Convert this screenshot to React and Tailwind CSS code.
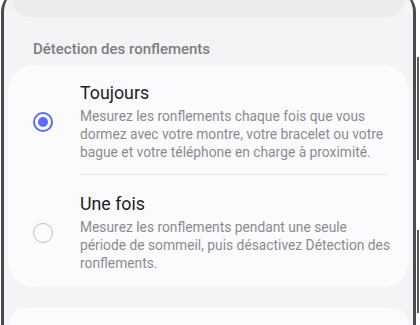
import React from "react";

function Radio({ checked }) {
  return checked ? (
    <div className="w-[20px] h-[20px] rounded-full border-[2px] border-[#5b6cf2] flex items-center justify-center shrink-0">
      <div className="w-[10px] h-[10px] rounded-full bg-[#5b6cf2]" />
    </div>
  ) : (
    <div className="w-[20px] h-[20px] rounded-full border-[1.5px] border-[#bcbcbe] shrink-0" />
  );
}

function Option({ checked, title, lines }) {
  return (
    <div className="flex items-center">
      <div className="w-[20px] ml-[25px] mr-[27px] flex justify-center">
        <Radio checked={checked} />
      </div>
      <div className="flex-1 pr-[8px]">
        <div className="text-[17.8px] leading-[22px] text-[#1e1e20]">{title}</div>
        <div className="mt-[3px] text-[13.8px] leading-[18px] text-[#8b8b8e] whitespace-nowrap">
          {lines.map((l, i) => (
            <div key={i}>{l}</div>
          ))}
        </div>
      </div>
    </div>
  );
}

export default function App() {
  return (
    <div
      className="w-[420px] h-[325px] overflow-hidden bg-white flex"
      style={{ fontFamily: "Roboto, 'Noto Sans', sans-serif" }}
    >
      <div className="w-[1px] shrink-0" />
      <div className="w-[415px] shrink-0 h-[345px] -mt-[10px] rounded-t-[22px] border-x-[3px] border-[#4a4a52] bg-[#f4f4f6] overflow-hidden">
        <div className="px-[4px] pt-[10px]">
          <div className="h-[17px] mx-[4px] rounded-b-[24px] bg-[#ececee]" />
          <div className="pl-[25px] pt-[23px] pb-[7px] text-[15px] leading-[18px] font-medium text-[#7d7d80]">
            Détection des ronflements
          </div>
          <div className="rounded-[26px] bg-[#fbfbfd] pt-[17px] pb-[15px]">
            <Option
              checked
              title="Toujours"
              lines={[
                "Mesurez les ronflements chaque fois que vous",
                "dormez avec votre montre, votre bracelet ou votre",
                "bague et votre téléphone en charge à proximité.",
              ]}
            />
            <div className="ml-[72px] mr-[22px] mt-[13px] mb-[18px] h-[1px] bg-[#e4e4e6]" />
            <Option
              title="Une fois"
              lines={[
                "Mesurez les ronflements pendant une seule",
                "période de sommeil, puis désactivez Détection des",
                "ronflements.",
              ]}
            />
          </div>
          <div className="mt-[20px] h-[40px] rounded-[26px] bg-[#fbfbfd]" />
        </div>
      </div>
      <div className="w-[4px] shrink-0 flex flex-col">
        <div className="mt-[57px] ml-[1px] w-[2px] h-[103px] bg-[#5a5a62]" />
        <div className="mt-[70px] ml-[1px] w-[2px] h-[83px] bg-[#5a5a62]" />
      </div>
    </div>
  );
}
